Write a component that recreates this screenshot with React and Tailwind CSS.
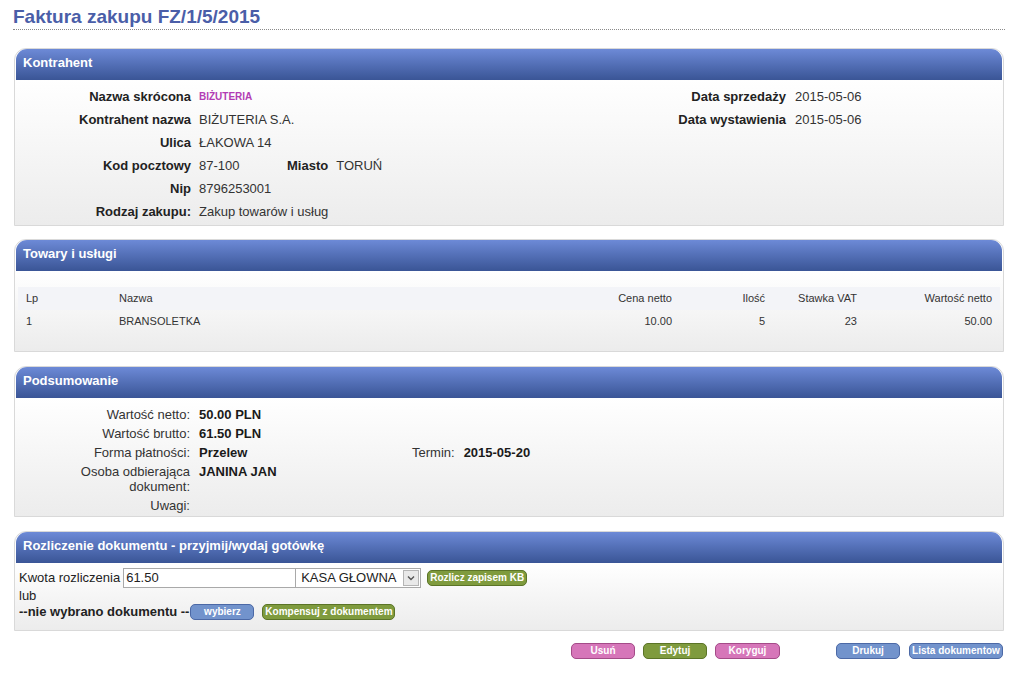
import React from "react";

function Card({ title, children, bodyClass = "", className = "" }) {
  return (
    <div className={"ml-[14px] w-[990px] rounded-t-[12px] border border-[#d9d9d9] bg-white " + className}>
      <div className="mx-[1px] h-[31px] rounded-t-[11px] bg-linear-to-b from-[#6d8ad7] to-[#3a5596] pl-[7px] text-[13px] font-bold leading-[28px] text-white">
        {title}
      </div>
      <div className={"bg-linear-to-b from-white to-[#ececec] " + bodyClass}>{children}</div>
    </div>
  );
}

function Btn({ color, w, children, className = "" }) {
  const map = {
    pink: "bg-[#d676b9] border-[#a44b88]",
    green: "bg-[#7f9b3e] border-[#5b7427]",
    blue: "bg-[#7293cc] border-[#4c69a6]",
  };
  return (
    <div
      className={
        "flex h-[16px] items-center justify-center rounded-[5px] border text-[10px] font-bold leading-none text-white " +
        map[color] +
        " " +
        w +
        " " +
        className
      }
    >
      {children}
    </div>
  );
}

export default function App() {
  const kLeft = [
    ["Nazwa skrócona", <span className="text-[10px] font-bold text-[#b23cb4]">BIŻUTERIA</span>],
    ["Kontrahent nazwa", "BIŻUTERIA S.A."],
    ["Ulica", "ŁAKOWA 14"],
    [
      "Kod pocztowy",
      <span className="flex">
        <span className="w-[88px]">87-100</span>
        <span className="font-bold text-[#222]">Miasto</span>
        <span className="ml-[8px]">TORUŃ</span>
      </span>,
    ],
    ["Nip", "8796253001"],
    ["Rodzaj zakupu:", "Zakup towarów i usług"],
  ];

  return (
    <div className="min-h-[673px] w-[1023px] bg-white font-['Liberation_Sans',Arial,sans-serif] text-[#333]">
      <div className="ml-[13px] w-[992px] border-b border-dotted border-[#8a8a8a] pt-[5px] text-[19px] font-bold leading-[24px] text-[#4a5ea8]">
        Faktura zakupu FZ/1/5/2015
      </div>

      {/* Kontrahent */}
      <Card title="Kontrahent" className="mt-[18px]" bodyClass="flex pt-[5px] pb-[2px]">
        <div className="grid w-[645px] grid-cols-[176px_1fr] content-start gap-x-[8px] text-[13px] leading-[23px]">
          {kLeft.map(([l, v], i) => (
            <React.Fragment key={i}>
              <div className="text-right font-bold text-[#222]">{l}</div>
              <div className="flex items-center">{v}</div>
            </React.Fragment>
          ))}
        </div>
        <div className="grid grid-cols-[126px_1fr] content-start gap-x-[9px] text-[13px] leading-[23px]">
          <div className="text-right font-bold text-[#222]">Data sprzedaży</div>
          <div>2015-05-06</div>
          <div className="text-right font-bold text-[#222]">Data wystawienia</div>
          <div>2015-05-06</div>
          {[0, 1, 2, 3].map((i) => (
            <React.Fragment key={i}>
              <div className="h-[23px]" />
              <div />
            </React.Fragment>
          ))}
        </div>
      </Card>

      {/* Towary i usługi */}
      <Card title="Towary i usługi" className="mt-[13px]" bodyClass="px-[3px] pt-[16px] pb-[18px]">
        <div className="grid grid-cols-[93px_469px_100px_93px_92px_135px] text-[11px] leading-[23px] text-[#333]">
          <div className="bg-[#f3f4f8] pl-[8px]">Lp</div>
          <div className="bg-[#f3f4f8] pl-[8px]">Nazwa</div>
          <div className="bg-[#f3f4f8] pr-[8px] text-right">Cena netto</div>
          <div className="bg-[#f3f4f8] pr-[8px] text-right">Ilość</div>
          <div className="bg-[#f3f4f8] pr-[8px] text-right">Stawka VAT</div>
          <div className="bg-[#f3f4f8] pr-[8px] text-right">Wartość netto</div>
          <div className="pl-[8px]">1</div>
          <div className="pl-[8px]">BRANSOLETKA</div>
          <div className="pr-[8px] text-right">10.00</div>
          <div className="pr-[8px] text-right">5</div>
          <div className="pr-[8px] text-right">23</div>
          <div className="pr-[8px] text-right">50.00</div>
        </div>
      </Card>

      {/* Podsumowanie */}
      <Card title="Podsumowanie" className="mt-[14px]" bodyClass="pt-[7px] pb-[1px]">
        <div className="grid grid-cols-[175px_1fr] gap-x-[9px] text-[13px] leading-[15px]">
          <div className="py-[2px] text-right">Wartość netto:</div>
          <div className="py-[2px] font-bold text-[#1a1a1a]">50.00 PLN</div>
          <div className="py-[2px] text-right">Wartość brutto:</div>
          <div className="py-[2px] font-bold text-[#1a1a1a]">61.50 PLN</div>
          <div className="py-[2px] text-right">Forma płatności:</div>
          <div className="flex py-[2px]">
            <span className="w-[213px] font-bold text-[#1a1a1a]">Przelew</span>
            <span>Termin:</span>
            <span className="ml-[9px] font-bold text-[#1a1a1a]">2015-05-20</span>
          </div>
          <div className="py-[2px] text-right">
            Osoba odbierająca
            <br />
            dokument:
          </div>
          <div className="py-[2px] font-bold text-[#1a1a1a]">JANINA JAN</div>
          <div className="py-[2px] text-right">Uwagi:</div>
          <div className="py-[2px]" />
        </div>
      </Card>

      {/* Rozliczenie */}
      <Card
        title="Rozliczenie dokumentu - przyjmij/wydaj gotówkę"
        className="mt-[14px]"
        bodyClass="px-[4px] pt-[5px] pb-[10px] text-[13px] text-[#222]"
      >
        <div className="flex h-[20px] items-center">
          <span>Kwota rozliczenia</span>
          <div className="ml-[3px] flex h-[20px] w-[173px] items-center border border-[#a9a9a9] bg-white pl-[2px] text-[13px]">
            61.50
          </div>
          <div className="flex h-[20px] w-[125px] items-center border border-l-0 border-[#a9a9a9] bg-white pl-[5px] text-[13px]">
            <span className="flex-1">KASA GŁOWNA</span>
            <span className="mr-[1px] flex h-[16px] w-[16px] items-center justify-center border border-[#b5b5b5] bg-[#e9e9e9]">
              <svg width="8" height="6" viewBox="0 0 8 6">
                <path d="M1 1.5 L4 4.5 L7 1.5" fill="none" stroke="#555" strokeWidth="1.4" />
              </svg>
            </span>
          </div>
          <Btn color="green" w="w-[100px]" className="ml-[6px] h-[15px]">
            Rozlicz zapisem KB
          </Btn>
        </div>
        <div className="leading-[15px]">lub</div>
        <div className="flex h-[17px] items-center">
          <span className="font-bold">--nie wybrano dokumentu --</span>
          <Btn color="blue" w="w-[64px]" className="ml-[1px]">
            wybierz
          </Btn>
          <Btn color="green" w="w-[133px]" className="ml-[8px]">
            Kompensuj z dokumentem
          </Btn>
        </div>
      </Card>

      <div className="ml-[14px] mt-[12px] flex w-[990px] justify-end pr-[1px]">
        <Btn color="pink" w="w-[64px]">Usuń</Btn>
        <Btn color="green" w="w-[64px]" className="ml-[8px]">Edytuj</Btn>
        <Btn color="pink" w="w-[65px]" className="ml-[8px]">Koryguj</Btn>
        <Btn color="blue" w="w-[64px]" className="ml-[56px]">Drukuj</Btn>
        <Btn color="blue" w="w-[94px]" className="ml-[9px]">Lista dokumentow</Btn>
      </div>
    </div>
  );
}
